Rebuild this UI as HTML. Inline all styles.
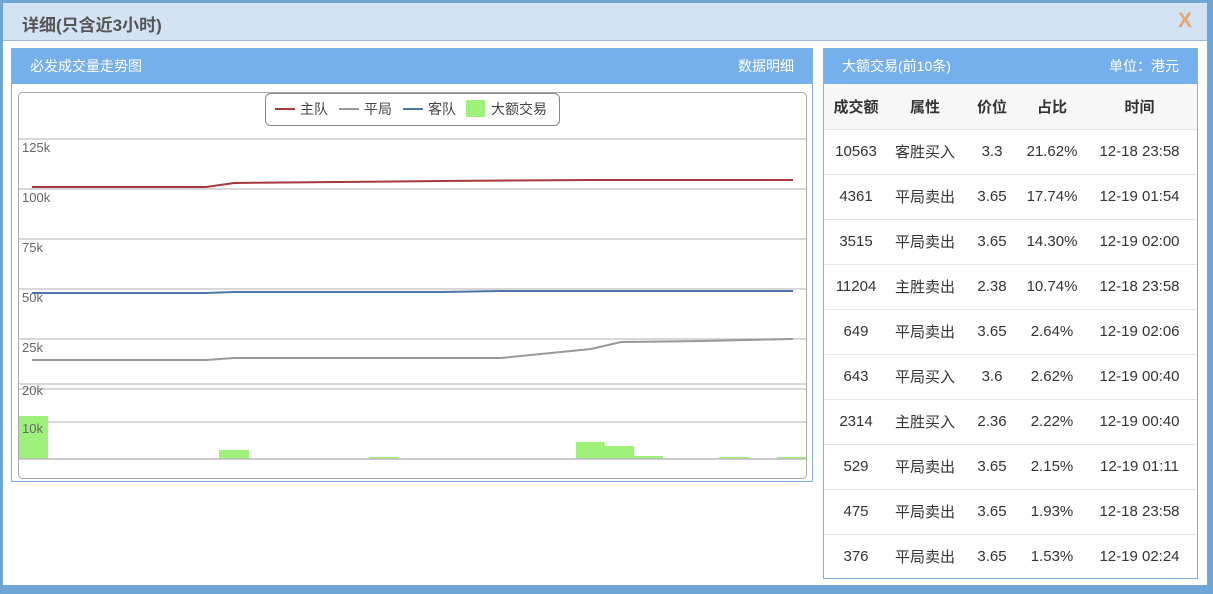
<!DOCTYPE html>
<html><head><meta charset="utf-8"><style>
*{margin:0;padding:0;box-sizing:border-box}
body{width:1213px;height:594px;overflow:hidden;background:#6fa6d6;font-family:"Liberation Sans","Noto Sans CJK SC",sans-serif;position:relative}
.win{position:absolute;left:3px;top:3px;width:1204px;height:582px;background:#fff}
.hd{position:absolute;left:0;top:0;width:1204px;height:38px;background:#d3e3f4;border-bottom:1px solid #9bb8d3}
.hd span{position:absolute;left:19px;top:8px;font-size:17px;font-weight:bold;color:#555}
.hd b{position:absolute;right:15px;top:6px;font-size:21px;color:#e3a870;font-weight:bold}
.lp{position:absolute;left:8px;top:45px;width:802px;height:434px;border:1px solid #7fb1e2}
.ph{height:35px;background:#76b0ec;color:#fff;font-size:14px;line-height:35px;padding:0 18px;display:flex;justify-content:space-between}
.rp{position:absolute;left:820px;top:45px;width:375px;height:531px;border:1px solid #7fb1e2}
table{border-collapse:collapse;width:373px;font-size:15px;color:#333;table-layout:fixed}
td,th{height:45px;text-align:center;border-bottom:1px solid #e6e6e6;padding:0;white-space:nowrap}
th{background:#f7f7f7;font-size:15px;color:#333}
</style></head><body>
<div class="win">
<div class="hd"><span>详细(只含近3小时)</span><b>X</b></div>
<div class="lp"><div class="ph"><span>必发成交量走势图</span><span>数据明细</span></div>
<svg width="800" height="398" style="position:absolute;left:0;top:35px">
<g transform="translate(-11,-83)">
<rect x="17.5" y="91.5" width="788" height="386" rx="4" fill="#fff" stroke="#aaa"/>
<g stroke="#ccc" stroke-width="1.5">
<line x1="18" x2="805" y1="138" y2="138"/><line x1="18" x2="805" y1="188" y2="188"/><line x1="18" x2="805" y1="238" y2="238"/><line x1="18" x2="805" y1="288" y2="288"/><line x1="18" x2="805" y1="338" y2="338"/><line x1="18" x2="805" y1="383" y2="383"/><line x1="18" x2="805" y1="388" y2="388"/><line x1="18" x2="805" y1="421" y2="421"/>
</g>
<g fill="#9ef27c">
<rect x="18" y="415" width="29" height="43"/><rect x="218" y="449" width="30" height="9"/><rect x="368" y="456" width="30" height="2"/><rect x="575" y="441" width="29" height="17"/><rect x="604" y="445" width="29" height="13"/><rect x="633" y="455" width="29" height="3"/><rect x="718" y="456" width="30" height="2"/><rect x="776" y="456" width="30" height="2"/>
</g>
<line x1="18" x2="805" y1="458" y2="458" stroke="#bbb" stroke-width="1.5"/>
<g font-size="13" fill="#666"><text x="21" y="151">125k</text><text x="21" y="201">100k</text><text x="21" y="251">75k</text><text x="21" y="301">50k</text><text x="21" y="351">25k</text><text x="21" y="394">20k</text><text x="21" y="432">10k</text></g>
<polyline fill="none" stroke="#a8383e" stroke-width="2" points="31,186 205,186 233,182 440,180 590,179 792,179"/>
<polyline fill="none" stroke="#4a76aa" stroke-width="2" points="31,292 205,292 233,291 440,291 500,290 792,290"/>
<polyline fill="none" stroke="#999" stroke-width="2" points="31,359 205,359 233,357 500,357 590,348 620,341 700,340 792,338"/>
<rect x="264.5" y="92.5" width="294" height="32" rx="5" fill="#fff" stroke="#888"/>
<line x1="274" x2="294" y1="108" y2="108" stroke="#a8383e" stroke-width="2"/>
<line x1="338" x2="358" y1="108" y2="108" stroke="#999" stroke-width="2"/>
<line x1="402" x2="422" y1="108" y2="108" stroke="#4a76aa" stroke-width="2"/>
<rect x="465" y="99" width="19" height="17" fill="#9ef27c"/>
<g font-size="14" fill="#444"><text x="299" y="113">主队</text><text x="363" y="113">平局</text><text x="427" y="113">客队</text><text x="490" y="113">大额交易</text></g>
</g></svg>
</div>
<div class="rp"><div class="ph"><span>大额交易(前10条)</span><span>单位：港元</span></div>
<table>
<colgroup><col style="width:64px"><col style="width:74px"><col style="width:60px"><col style="width:60px"><col style="width:115px"></colgroup>
<tr><th>成交额</th><th>属性</th><th>价位</th><th>占比</th><th>时间</th></tr>
<tr><td>10563</td><td>客胜买入</td><td>3.3</td><td>21.62%</td><td>12-18 23:58</td></tr>
<tr><td>4361</td><td>平局卖出</td><td>3.65</td><td>17.74%</td><td>12-19 01:54</td></tr>
<tr><td>3515</td><td>平局卖出</td><td>3.65</td><td>14.30%</td><td>12-19 02:00</td></tr>
<tr><td>11204</td><td>主胜卖出</td><td>2.38</td><td>10.74%</td><td>12-18 23:58</td></tr>
<tr><td>649</td><td>平局卖出</td><td>3.65</td><td>2.64%</td><td>12-19 02:06</td></tr>
<tr><td>643</td><td>平局买入</td><td>3.6</td><td>2.62%</td><td>12-19 00:40</td></tr>
<tr><td>2314</td><td>主胜买入</td><td>2.36</td><td>2.22%</td><td>12-19 00:40</td></tr>
<tr><td>529</td><td>平局卖出</td><td>3.65</td><td>2.15%</td><td>12-19 01:11</td></tr>
<tr><td>475</td><td>平局卖出</td><td>3.65</td><td>1.93%</td><td>12-18 23:58</td></tr>
<tr><td style="border:0">376</td><td style="border:0">平局卖出</td><td style="border:0">3.65</td><td style="border:0">1.53%</td><td style="border:0">12-19 02:24</td></tr>
</table></div>
</div>
</body></html>
